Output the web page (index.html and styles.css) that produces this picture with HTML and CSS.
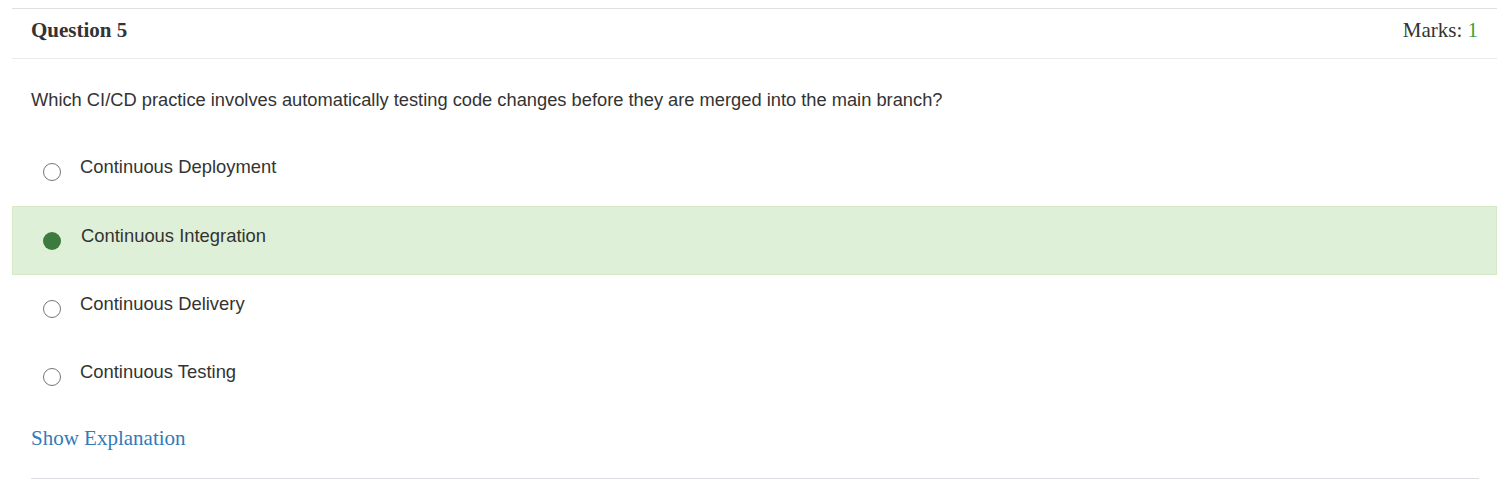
FILE: index.html
```html
<!DOCTYPE html>
<html>
<head>
<meta charset="utf-8">
<link rel="stylesheet" href="styles.css">
</head>
<body>
<div class="panel">
  <div class="panel-head">
    <span class="q-title">Question 5</span>
    <span class="marks">Marks: <span class="marks-val">1</span></span>
  </div>
  <p class="q-text">Which CI/CD practice involves automatically testing code changes before they are merged into the main branch?</p>
  <div class="options">
    <div class="option"><span class="radio"></span><span class="opt-text">Continuous Deployment</span></div>
    <div class="option selected"><span class="radio checked"></span><span class="opt-text">Continuous Integration</span></div>
    <div class="option"><span class="radio"></span><span class="opt-text">Continuous Delivery</span></div>
    <div class="option"><span class="radio"></span><span class="opt-text">Continuous Testing</span></div>
  </div>
  <div class="explain"><a class="explain-link">Show Explanation</a></div>
  <hr class="rule">
</div>
</body>
</html>
```

FILE: styles.css
```css
html, body {
  margin: 0;
  padding: 0;
  background: #fff;
}
.panel {
  margin: 8px 0 0 12px;
  width: 1485px;
  border-top: 1px solid #e0e0e0;
}
.panel-head {
  box-sizing: border-box;
  display: flex;
  justify-content: space-between;
  align-items: center;
  height: 50px;
  padding: 0 19px 6px;
  border-bottom: 1px solid #eaeaea;
  font-family: "Liberation Serif", "Times New Roman", serif;
  font-size: 21px;
  color: #333;
}
.q-title {
  font-weight: bold;
}
.marks-val {
  color: #3c9e3c;
}
.q-text {
  margin: 0;
  padding: 30px 19px 0;
  height: 48px;
  font-family: "Liberation Sans", Arial, sans-serif;
  font-size: 18.3px;
  color: #333;
}
.options {
  display: flex;
  flex-direction: column;
}
.option {
  display: flex;
  align-items: center;
  height: 67px;
  border: 1px solid transparent;
  font-family: "Liberation Sans", Arial, sans-serif;
  font-size: 18.4px;
  color: #333;
}
.option + .option + .option {
  height: 66px;
}
.option.selected {
  background: #dff0d8;
  border-color: #d6e9c6;
}
.radio {
  box-sizing: border-box;
  width: 18px;
  height: 18px;
  border-radius: 50%;
  border: 1.5px solid #767676;
  margin-left: 30px;
  margin-right: 19px;
  flex: none;
}
.radio.checked {
  border: none;
  background: #3d7a3d;
  margin-right: 20px;
}
.opt-text {
  position: relative;
  top: -5px;
}
.explain {
  padding: 15px 19px 0;
  height: 37px;
  font-family: "Liberation Serif", "Times New Roman", serif;
  font-size: 21px;
}
.explain-link {
  color: #337ab7;
  cursor: pointer;
}
.rule {
  margin: 15px 18px 0 19px;
  border: none;
  border-top: 1px solid #dcdce2;
}
```
